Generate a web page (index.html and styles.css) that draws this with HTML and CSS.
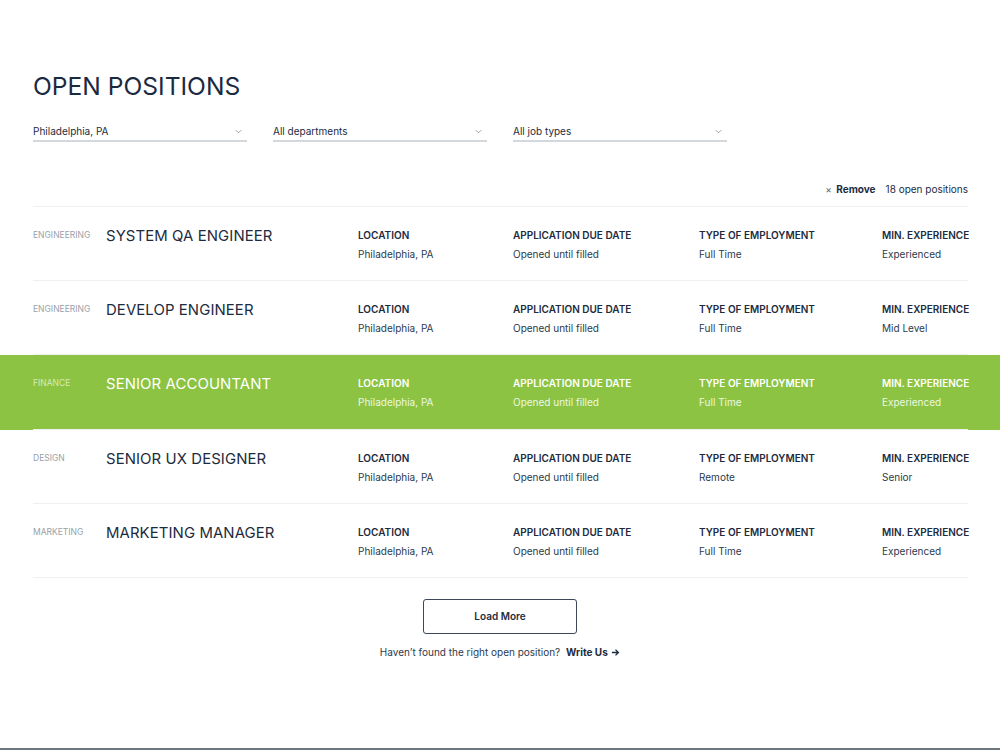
FILE: index.html
```html
<!DOCTYPE html>
<html lang="en">
<head>
<meta charset="utf-8">
<title>Open Positions</title>
<link rel="stylesheet" href="styles.css">
</head>
<body>
<main class="page">
  <div class="wrap">
    <h1 class="title">OPEN POSITIONS</h1>
    <div class="filters">
      <div class="select"><span>Philadelphia, PA</span><svg class="chev" viewBox="0 0 8 5" width="7" height="5"><path d="M1 1l3 3 3-3" fill="none" stroke="#8a929c" stroke-width="1"/></svg></div>
      <div class="select"><span>All departments</span><svg class="chev" viewBox="0 0 8 5" width="7" height="5"><path d="M1 1l3 3 3-3" fill="none" stroke="#8a929c" stroke-width="1"/></svg></div>
      <div class="select"><span>All job types</span><svg class="chev" viewBox="0 0 8 5" width="7" height="5"><path d="M1 1l3 3 3-3" fill="none" stroke="#8a929c" stroke-width="1"/></svg></div>
    </div>
    <div class="summary">
      <span class="remove"><span class="x">×</span> Remove</span>
      <span class="count">18 open positions</span>
    </div>
  </div>

  <ul class="jobs">
    <li class="job">
      <div class="job-in">
        <span class="cat">ENGINEERING</span>
        <span class="name">SYSTEM QA ENGINEER</span>
        <div class="field"><b>LOCATION</b><span>Philadelphia, PA</span></div>
        <div class="field"><b>APPLICATION DUE DATE</b><span>Opened until filled</span></div>
        <div class="field"><b>TYPE OF EMPLOYMENT</b><span>Full Time</span></div>
        <div class="field"><b>MIN. EXPERIENCE</b><span>Experienced</span></div>
      </div>
    </li>
    <li class="job">
      <div class="job-in">
        <span class="cat">ENGINEERING</span>
        <span class="name">DEVELOP ENGINEER</span>
        <div class="field"><b>LOCATION</b><span>Philadelphia, PA</span></div>
        <div class="field"><b>APPLICATION DUE DATE</b><span>Opened until filled</span></div>
        <div class="field"><b>TYPE OF EMPLOYMENT</b><span>Full Time</span></div>
        <div class="field"><b>MIN. EXPERIENCE</b><span>Mid Level</span></div>
      </div>
    </li>
    <li class="job active">
      <div class="job-in">
        <span class="cat">FINANCE</span>
        <span class="name">SENIOR ACCOUNTANT</span>
        <div class="field"><b>LOCATION</b><span>Philadelphia, PA</span></div>
        <div class="field"><b>APPLICATION DUE DATE</b><span>Opened until filled</span></div>
        <div class="field"><b>TYPE OF EMPLOYMENT</b><span>Full Time</span></div>
        <div class="field"><b>MIN. EXPERIENCE</b><span>Experienced</span></div>
      </div>
    </li>
    <li class="job">
      <div class="job-in">
        <span class="cat">DESIGN</span>
        <span class="name">SENIOR UX DESIGNER</span>
        <div class="field"><b>LOCATION</b><span>Philadelphia, PA</span></div>
        <div class="field"><b>APPLICATION DUE DATE</b><span>Opened until filled</span></div>
        <div class="field"><b>TYPE OF EMPLOYMENT</b><span>Remote</span></div>
        <div class="field"><b>MIN. EXPERIENCE</b><span>Senior</span></div>
      </div>
    </li>
    <li class="job">
      <div class="job-in">
        <span class="cat">MARKETING</span>
        <span class="name">MARKETING MANAGER</span>
        <div class="field"><b>LOCATION</b><span>Philadelphia, PA</span></div>
        <div class="field"><b>APPLICATION DUE DATE</b><span>Opened until filled</span></div>
        <div class="field"><b>TYPE OF EMPLOYMENT</b><span>Full Time</span></div>
        <div class="field"><b>MIN. EXPERIENCE</b><span>Experienced</span></div>
      </div>
    </li>
  </ul>

  <div class="more">
    <button class="load">Load More</button>
    <p class="hint">Haven’t found the right open position? <a class="write" href="#">Write Us <svg viewBox="0 0 10 10" width="9" height="9"><path d="M1 5h7M5 1.8L8.2 5 5 8.2" fill="none" stroke="#1d2b3e" stroke-width="1.5"/></svg></a></p>
  </div>
</main>
</body>
</html>
```
FILE: styles.css
```css
* { box-sizing: border-box; }

html, body { margin: 0; padding: 0; }

body {
  font-family: Inter, "Noto Sans", sans-serif;
  color: #1d2b3e;
  background: #fff;
  min-height: 750px;
  border-bottom: 2px solid #6d767d;
}

.page { padding-top: 70px; }

.wrap { padding: 0 32px 0 33px; }

.title {
  margin: 0;
  font-size: 24.6px;
  font-weight: 400;
  line-height: 32px;
  color: #1a2a3f;
}

.filters {
  display: flex;
  gap: 26px;
  margin-top: 20px;
}

.select {
  width: 214px;
  display: flex;
  justify-content: space-between;
  align-items: center;
  height: 20px;
  padding: 2px 5px 2px 0;
  border-bottom: 2px solid #d3d8dd;
  font-size: 10px;
  color: #1d2b3e;
}

.summary {
  display: flex;
  justify-content: flex-end;
  gap: 10px;
  margin-top: 40px;
  padding-bottom: 10px;
  border-bottom: 1px solid #eef0f2;
  font-size: 10px;
  line-height: 14px;
}

.remove { font-weight: 700; }
.remove .x { font-weight: 400; color: #5d6875; margin-right: 2px; }
.count { color: #1d2b3e; }

.jobs { list-style: none; margin: 0; padding: 0; }

.job-in {
  margin: 0 32px 0 33px;
  height: 74.2px;
  padding-top: 21px;
  border-bottom: 1px solid #eef0f2;
  display: grid;
  grid-template-columns: 73px 252px 155px 186px 183px 1fr;
  align-items: start;
}

.cat {
  font-size: 8.5px;
  line-height: 12px;
  margin-top: 1px;
  color: #9aa1a9;
}

.name {
  font-size: 14.9px;
  line-height: 16px;
  font-weight: 400;
  color: #1d2b3e;
  letter-spacing: 0.1px;
}

.field { display: flex; flex-direction: column; gap: 5px; white-space: nowrap; }

.field b {
  font-size: 10px;
  line-height: 14px;
  font-weight: 600;
  color: #1d2b3e;
}

.field span {
  font-size: 10px;
  line-height: 14px;
  color: #2c3a4c;
}

.job.active { background: #8cc342; }
.job.active .cat { color: #d6ebbb; }
.job.active .name,
.job.active .field b { color: #fff; }
.job.active .field span { color: #eef7e3; }

.more {
  display: flex;
  flex-direction: column;
  align-items: center;
  padding-top: 21px;
}

.load {
  width: 154px;
  height: 35px;
  border: 1px solid #3c4857;
  border-radius: 3px;
  background: #fff;
  font-family: inherit;
  font-size: 10px;
  font-weight: 600;
  color: #1d2b3e;
  cursor: pointer;
}

.hint {
  margin: 11px 0 0;
  font-size: 10px;
  line-height: 14px;
  color: #2c3a4c;
}

.write {
  margin-left: 3px;
  font-weight: 700;
  color: #1d2b3e;
  text-decoration: none;
}

.write svg { vertical-align: -1px; margin-left: 1px; }
```
